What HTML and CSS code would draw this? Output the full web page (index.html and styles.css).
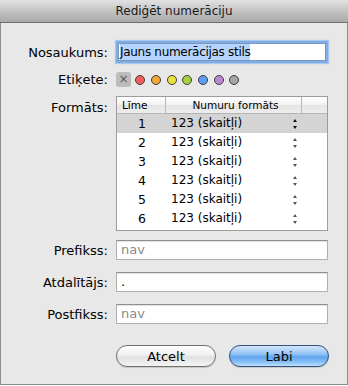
FILE: index.html
```html
<!DOCTYPE html>
<html lang="lv">
  <head>
    <meta charset="UTF-8" />
    <title>Rediģēt numerāciju</title>
    <link rel="stylesheet" href="styles.css">
  </head>
  <body>
    <div class="window">
      <div class="titlebar">Rediģēt numerāciju</div>

      <div class="content">
        <!-- nosaukums -->
        <div class="row row-name">
          <div class="label">Nosaukums:</div>
          <div class="input input-focus"><span class="selected">Jauns numerācijas stils</span></div>
        </div>

        <!-- etiķete -->
        <div class="row row-tags">
          <div class="label">Etiķete:</div>
          <div class="tags">
            <span class="tag-none">×</span>
            <span class="dot red"></span>
            <span class="dot orange"></span>
            <span class="dot yellow"></span>
            <span class="dot green"></span>
            <span class="dot blue"></span>
            <span class="dot purple"></span>
            <span class="dot gray"></span>
          </div>
        </div>

        <!-- formāts -->
        <div class="row row-table">
          <div class="label label-top">Formāts:</div>
          <div class="table">
            <div class="thead">
              <div class="col-level">Līme</div>
              <div class="col-format">Numuru formāts</div>
              <div class="col-extra"></div>
            </div>
            <div class="tbody" id="rows"></div>
          </div>
        </div>

        <div class="row row-field first-field">
          <div class="label">Prefikss:</div>
          <div class="input placeholder">nav</div>
        </div>
        <div class="row row-field">
          <div class="label">Atdalītājs:</div>
          <div class="input">.</div>
        </div>
        <div class="row row-field">
          <div class="label">Postfikss:</div>
          <div class="input placeholder">nav</div>
        </div>

        <div class="row row-buttons">
          <div class="label"></div>
          <div class="buttons">
            <button class="btn">Atcelt</button>
            <button class="btn btn-default">Labi</button>
          </div>
        </div>
      </div>
    </div>

    <script>
      // līmeņu rindas
      const rows = document.getElementById('rows');
      for (let i = 1; i <= 6; i++) {
        const tr = document.createElement('div');
        tr.className = 'tr' + (i === 1 ? ' tr-selected' : '');
        tr.innerHTML =
          '<div class="col-level">' + i + '</div>' +
          '<div class="col-format"><span>123 (skaitļi)</span>' +
          '<span class="stepper"><i class="up"></i><i class="down"></i></span></div>' +
          '<div class="col-extra"></div>';
        rows.appendChild(tr);
      }
    </script>
  </body>
</html>
```

FILE: styles.css
```css
/* logs */
body {
  margin: 0;
  font-family: 'Lucida Grande', 'DejaVu Sans', sans-serif;
  font-size: 13px;
  color: #000;
  background: #fff;
}

.window {
  width: 348px;
  height: 385px;
  box-sizing: border-box;
  border: 1px solid #8c8c8c;
  border-top: none;
  background: #e8e8e8;
}

.titlebar {
  height: 22px;
  line-height: 23px;
  font-size: 12px;
  text-align: center;
  color: #1a1a1a;
  background: linear-gradient(#e2e2e2, #bdbdbd 60%, #a9a9a9);
  border-bottom: 1px solid #6e6e6e;
  margin: 0 -1px;
}

.content {
  display: flex;
  flex-direction: column;
}

/* rindas */
.row {
  display: flex;
  align-items: center;
}

.label {
  width: 107px;
  flex: none;
  text-align: right;
  margin-right: 8px;
}

.row-name {
  margin-top: 20px;
  height: 18px;
}

.row-tags {
  margin-top: 11px;
  height: 15px;
}

.row-table {
  margin-top: 9px;
  align-items: flex-start;
}

.label-top {
  padding-top: 4px;
}

.row-field {
  margin-top: 12px;
  height: 20px;
}

.first-field {
  margin-top: 9px;
}

.row-buttons {
  margin-top: 21px;
  height: 22px;
}

/* ievades lauki */
.input {
  width: 212px;
  height: 20px;
  box-sizing: border-box;
  background: #fff;
  border: 1px solid #b0b0b0;
  border-top-color: #8e8e8e;
  box-shadow: inset 0 1px 1px rgba(0, 0, 0, 0.12);
  padding: 0 4px;
  line-height: 18px;
  white-space: nowrap;
}

.placeholder {
  color: #8a8a8a;
}

.input-focus {
  width: 208px;
  height: 18px;
  margin-left: 2px;
  line-height: 16px;
  padding: 0 1px;
  font-size: 12px;
  letter-spacing: -0.3px;
  border-color: #7e97b8;
  box-shadow: 0 0 0 2px #7eaee8, 0 0 1px 3px #a9c8ee;
}

.selected {
  background: #b5d5ff;
  padding: 1px 0;
}

/* etiķetes */
.tags {
  display: flex;
  align-items: center;
}

.tag-none {
  width: 15px;
  height: 15px;
  border-radius: 3px;
  background: #bcbcbc;
  color: #555;
  font-size: 12px;
  line-height: 15px;
  text-align: center;
  margin-right: -1.4px;
}

.dot {
  width: 8px;
  height: 8px;
  border-radius: 50%;
  border: 1px solid #3c3c3c;
  margin-left: 5.7px;
  box-sizing: content-box;
}

.red { background: #f25d5f; }
.orange { background: #f5a53b; }
.yellow { background: #ece23d; }
.green { background: #a5d13c; }
.blue { background: #5e9ff2; }
.purple { background: #bf85d6; }
.gray { background: #a6a6a6; }

/* tabula */
.table {
  width: 212px;
  height: 135px;
  box-sizing: border-box;
  border: 1px solid #9c9c9c;
  background: #fff;
}

.thead {
  display: flex;
  height: 16px;
  border-bottom: 1px solid #b4b4b4;
  background: linear-gradient(#fff, #f1f1f1 50%, #e4e4e4 51%, #ededed);
  font-size: 10.5px;
  line-height: 16px;
}

.thead .col-level {
  text-align: left;
  padding-left: 5px;
  box-sizing: border-box;
}

.thead > div {
  border-right: 1px solid #b8b8b8;
}

.thead .col-format {
  text-align: center;
  display: block;
}

.col-level {
  width: 49px;
  flex: none;
  text-align: center;
}

.col-format {
  width: 136px;
  flex: none;
  display: flex;
  justify-content: space-between;
  align-items: center;
  padding-left: 4px;
  box-sizing: border-box;
}

.col-extra {
  flex: 1;
}

.thead .col-extra {
  border-right: none;
}

.tr {
  display: flex;
  height: 19px;
  line-height: 19px;
  font-size: 12.5px;
}

.tr .col-level {
  width: 50px;
}

.tr .col-format span:first-child {
  font-size: 12px;
}

.tr-selected {
  background: #d4d4d4;
}

.stepper {
  display: flex;
  flex-direction: column;
  align-items: center;
  gap: 4px;
  margin-right: 6px;
}

.stepper i {
  width: 0;
  height: 0;
  border-left: 2.5px solid transparent;
  border-right: 2.5px solid transparent;
}

.stepper .up {
  border-bottom: 3.5px solid #555;
}

.stepper .down {
  border-top: 3.5px solid #555;
}

.tr-selected .stepper i {
  border-bottom-color: #111;
  border-top-color: #111;
}

/* pogas */
.buttons {
  display: flex;
  gap: 13px;
}

.btn {
  width: 100px;
  height: 22px;
  border-radius: 11px;
  border: 1px solid #707070;
  background: linear-gradient(#fdfdfd, #f1f1f1 45%, #e0e0e0 55%, #f4f4f4);
  box-shadow: 0 1px 1px rgba(0, 0, 0, 0.15);
  font-family: 'Lucida Grande', 'DejaVu Sans', sans-serif;
  font-size: 13px;
  padding: 0;
  color: #000;
}

.btn-default {
  border-color: #34507f;
  background: linear-gradient(#d2e7fc, #92c3f6 40%, #62a3ee 55%, #86c0f7 80%, #bfe0fd);
}
```
